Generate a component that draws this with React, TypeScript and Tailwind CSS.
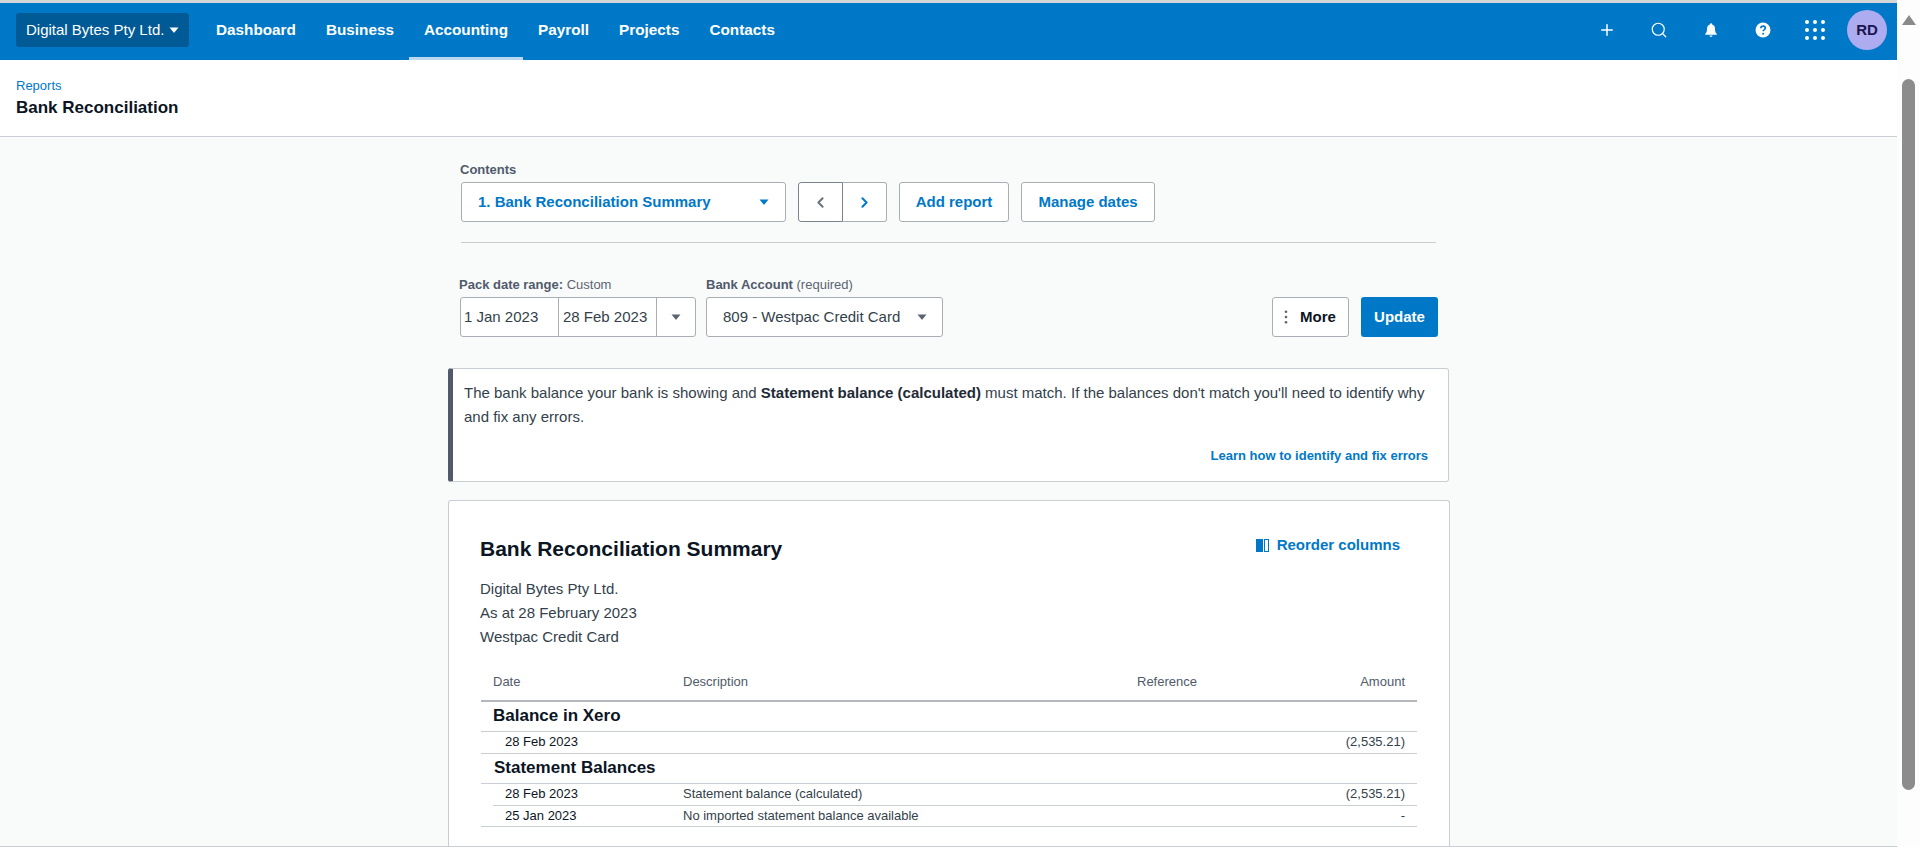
import { ChevronLeft, ChevronRight, Plus, Search } from 'lucide-react';

const navItems = ['Dashboard', 'Business', 'Accounting', 'Payroll', 'Projects', 'Contacts'];

function Caret({ className }: { className: string }) {
  return (
    <svg viewBox="0 0 10 6" className={className} fill="currentColor">
      <path d="M0.5 0.5h9L5.6 5.3a.8.8 0 0 1-1.2 0z" />
    </svg>
  );
}

function TopBar() {
  return (
    <header className="h-[57px] bg-[#0078c8] flex items-stretch text-white shrink-0">
      <button className="ml-4 mt-[10px] h-[34px] w-[173px] rounded-[3px] bg-[#005a96] flex items-center pl-[10px] text-[15px] whitespace-nowrap">
        Digital Bytes Pty Ltd.
        <Caret className="w-[10px] h-[6px] ml-[5px]" />
      </button>
      <nav className="ml-3 flex items-stretch">
        {navItems.map((item) => (
          <a
            key={item}
            className={
              'px-[15px] flex items-center text-[15.3px] font-bold border-b-[3px] ' +
              (item === 'Accounting' ? 'border-[#b8d9ef]' : 'border-transparent')
            }
          >
            {item}
          </a>
        ))}
      </nav>
      <div className="ml-auto flex items-center pr-[10px] pb-[3px]">
        <div className="w-[52px] flex justify-center">
          <Plus className="w-[18px] h-[18px]" strokeWidth={2} />
        </div>
        <div className="w-[52px] flex justify-center">
          <Search className="w-[18px] h-[18px]" strokeWidth={1.6} />
        </div>
        <div className="w-[52px] flex justify-center">
          <svg viewBox="0 0 16 16" className="w-[16px] h-[16px]" fill="currentColor">
            <path d="M8 1.2c-.6 0-1 .4-1 1v.4C5 3.1 4 4.8 4 6.8c0 2.6-.5 4-1.8 5.2v.8h11.6V12C12.500 10.800 12 9.400 12 6.800c0-2-1-3.700-3-4.200v-.4c0-.6-.4-1-1-1zM6.500 13.600a1.500 1.300 0 0 0 3 0z" />
          </svg>
        </div>
        <div className="w-[52px] flex justify-center">
          <svg viewBox="0 0 16 16" className="w-[16px] h-[16px]">
            <circle cx="8" cy="8" r="7.500" fill="#fff" />
            <path d="M5.800 6.300C5.900 4.900 6.800 4.200 8.100 4.200c1.300 0 2.200.8 2.200 1.900 0 1-.6 1.400-1.200 1.800-.6.400-.9.700-.9 1.400" fill="none" stroke="#0078c8" strokeWidth="1.700" />
            <circle cx="8.100" cy="11.700" r="1" fill="#0078c8" />
          </svg>
        </div>
        <div className="w-[52px] flex justify-center">
          <div className="grid grid-cols-3 gap-x-[4px] gap-y-[4px]">
            {Array.from({ length: 9 }).map((_, i) => (
              <span key={i} className="w-[4px] h-[4px] rounded-full bg-white" />
            ))}
          </div>
        </div>
        <div className="ml-[6px] w-[40px] h-[40px] rounded-full bg-[#aeacf1] text-[#1a1650] text-[15px] font-bold flex items-center justify-center">
          RD
        </div>
      </div>
    </header>
  );
}

function Toolbar() {
  return (
    <div>
      <div className="ml-[13px] w-[975px]">
        <div className="text-[13px] leading-4 font-bold text-[#505a6b] mb-[5px] translate-y-[1px] -translate-x-[1px]">Contents</div>
        <div className="flex items-center">
          <button className="w-[325px] h-10 bg-white border border-[#a9aeb5] rounded-[3px] flex items-center justify-between pl-4 pr-[16px] text-[15px] font-bold text-[#0078c8]">
            1. Bank Reconciliation Summary
            <Caret className="w-[10px] h-[6px]" />
          </button>
          <div className="ml-3 flex h-10 w-[89px] bg-white">
            <button className="w-[45px] border border-[#7d838c] rounded-l-[3px] flex items-center justify-center text-[#6b7280]">
              <ChevronLeft className="w-[17px] h-[17px]" strokeWidth={2.8} />
            </button>
            <button className="flex-1 border border-l-0 border-[#a9aeb5] rounded-r-[3px] flex items-center justify-center text-[#0078c8]">
              <ChevronRight className="w-[17px] h-[17px]" strokeWidth={2.8} />
            </button>
          </div>
          <button className="ml-3 w-[110px] h-10 bg-white border border-[#a9aeb5] rounded-[3px] text-[15px] font-bold text-[#0078c8]">
            Add report
          </button>
          <button className="ml-3 w-[134px] h-10 bg-white border border-[#a9aeb5] rounded-[3px] text-[15px] font-bold text-[#0078c8]">
            Manage dates
          </button>
        </div>
        <div className="mt-[20px] border-t border-[#c9cccf]" />
      </div>

      <div className="ml-3 mt-[33px] flex items-end">
        <div>
          <div className="text-[13px] leading-4 text-[#5b6470] mb-[5px] translate-y-[1px] -translate-x-[1px]">
            <b className="text-[#505a6b]">Pack date range:</b> Custom
          </div>
          <div className="flex w-[236px] h-10 bg-white border border-[#a9aeb5] rounded-[3px] text-[15px] text-[#333f4b]">
            <div className="w-[98px] border-r border-[#a9aeb5] flex items-center pl-[3px]">1 Jan 2023</div>
            <div className="w-[98px] border-r border-[#a9aeb5] flex items-center pl-[4px] whitespace-nowrap">28 Feb 2023</div>
            <div className="flex-1 flex items-center justify-center text-[#5b6470]">
              <Caret className="w-[10px] h-[6px]" />
            </div>
          </div>
        </div>
        <div className="ml-[10px]">
          <div className="text-[13px] leading-4 text-[#5b6470] mb-[5px] translate-y-[1px]">
            <b className="text-[#505a6b]">Bank Account</b> (required)
          </div>
          <div className="flex items-center justify-between w-[237px] h-10 bg-white border border-[#a9aeb5] rounded-[3px] pl-4 pr-[15px] text-[15px] text-[#333f4b]">
            809 - Westpac Credit Card
            <Caret className="w-[10px] h-[6px] text-[#5b6470]" />
          </div>
        </div>
        <button className="ml-auto w-[77px] h-10 bg-white border border-[#a9aeb5] rounded-[3px] flex items-center pl-[11px] text-[15px] font-bold text-[#0b1524]">
          <svg viewBox="0 0 4 16" className="w-[4px] h-[14px] mr-[12px]" fill="#5b6470">
            <circle cx="2" cy="2" r="1.500" />
            <circle cx="2" cy="8" r="1.500" />
            <circle cx="2" cy="14" r="1.500" />
          </svg>
          More
        </button>
        <button className="ml-3 w-[77px] h-10 bg-[#0078c8] rounded-[3px] text-[15px] font-bold text-white">
          Update
        </button>
      </div>
    </div>
  );
}

function Notice() {
  return (
    <div className="mt-[31px] w-[1001px] h-[114px] bg-white border border-[#c9ced4] border-l-[5px] border-l-[#505a6b] rounded-[3px] pl-[11px] pr-5 pt-[12px] text-[15px] leading-6 text-[#333f4b]">
      <p>
        The bank balance your bank is showing and <b className="text-[#1f2a37]">Statement balance (calculated)</b> must match. If the balances don't match you'll need to identify why and fix any errors.
      </p>
      <div className="mt-[19px] text-right text-[13px] leading-4 font-bold text-[#0078c8]">
        Learn how to identify and fix errors
      </div>
    </div>
  );
}

function SectionRow({ title, indent }: { title: string; indent: string }) {
  return (
    <div className={'h-[30px] border-b border-[#c9ced4] flex items-center pb-[2px] text-[17px] font-bold text-[#0b1524] ' + indent}>
      {title}
    </div>
  );
}

function DataRow({ date, desc, amount, inset, height }: { date: string; desc?: string; amount: string; inset?: boolean; height: string }) {
  return (
    <div
      className={
        'grid grid-cols-[190px_454px_1fr_1fr] items-center pr-3 pb-[2px] border-b border-[#c9ced4] text-[13px] text-[#333f4b] ' +
        height + ' ' + (inset ? 'ml-3' : 'pl-3')
      }
    >
      <div className="pl-3 text-[#0b1524]">{date}</div>
      <div>{desc}</div>
      <div />
      <div className="text-right">{amount}</div>
    </div>
  );
}

function ReportCard() {
  return (
    <section className="mt-[18px] w-[1002px] flex-1 bg-white border border-b-0 border-[#c9ced4] rounded-t-[3px] pl-[31px] pr-[32px] pt-[33px]">
      <div className="flex items-start justify-between pr-[17px]">
        <h2 className="text-[21px] leading-[30px] font-bold text-[#0b1524]">Bank Reconciliation Summary</h2>
        <button className="flex items-center text-[15px] leading-[22px] font-bold text-[#0078c8]">
          <svg viewBox="0 0 13 13" className="w-[13px] h-[13px] mr-2">
            <rect x="0" y="0" width="7" height="13" fill="#0078c8" />
            <rect x="8.500" y="0.500" width="4" height="12" fill="none" stroke="#0078c8" />
          </svg>
          Reorder columns
        </button>
      </div>
      <div className="mt-[13px] text-[15px] leading-6 text-[#333f4b]">
        <div>Digital Bytes Pty Ltd.</div>
        <div>As at 28 February 2023</div>
        <div>Westpac Credit Card</div>
      </div>
      <div className="mt-[15px] ml-[1px] w-[936px]">
        <div className="h-[38px] pl-3 pr-3 grid grid-cols-[190px_454px_1fr_1fr] items-center border-b-2 border-[#b3b7bc] text-[13px] text-[#505a6b]">
          <div>Date</div>
          <div>Description</div>
          <div>Reference</div>
          <div className="text-right">Amount</div>
        </div>
        <SectionRow title="Balance in Xero" indent="pl-3" />
        <DataRow date="28 Feb 2023" amount="(2,535.21)" height="h-[22px]" />
        <SectionRow title="Statement Balances" indent="pl-[13px]" />
        <DataRow date="28 Feb 2023" desc="Statement balance (calculated)" amount="(2,535.21)" inset height="h-[22px]" />
        <DataRow date="25 Jan 2023" desc="No imported statement balance available" amount="-" height="h-[21px]" />
      </div>
    </section>
  );
}

export default function App() {
  return (
    <div className="h-[847px] w-[1920px] overflow-hidden flex bg-white font-['Liberation_Sans',Arial,sans-serif]">
      <div className="w-[1897px] h-full flex flex-col border-t-[3px] border-t-[#d4d6d8] border-b border-b-[#c9ced4]">
        <TopBar />
        <div className="h-[77px] shrink-0 bg-white border-b border-[#c9ced4] pl-4 pt-[18px]">
          <a className="block text-[13px] leading-4 text-[#0078c8]">Reports</a>
          <h1 className="mt-[2px] text-[17px] leading-6 font-bold text-[#0b1524]">Bank Reconciliation</h1>
        </div>
        <main className="flex-1 min-h-0 overflow-hidden bg-[#f9fbfb] pl-[448px] pt-[24px] flex flex-col items-start">
          <div className="w-[990px]">
            <Toolbar />
          </div>
          <Notice />
          <ReportCard />
        </main>
      </div>
      <div className="w-[23px] h-full bg-[#fdfdfd] flex flex-col items-center pt-[15px]">
        <div className="w-0 h-0 border-x-[7px] border-x-transparent border-b-[10px] border-b-[#8a8a8a]" />
        <div className="mt-[54px] w-[13px] h-[711px] rounded-full bg-[#8c8c8c]" />
      </div>
    </div>
  );
}
